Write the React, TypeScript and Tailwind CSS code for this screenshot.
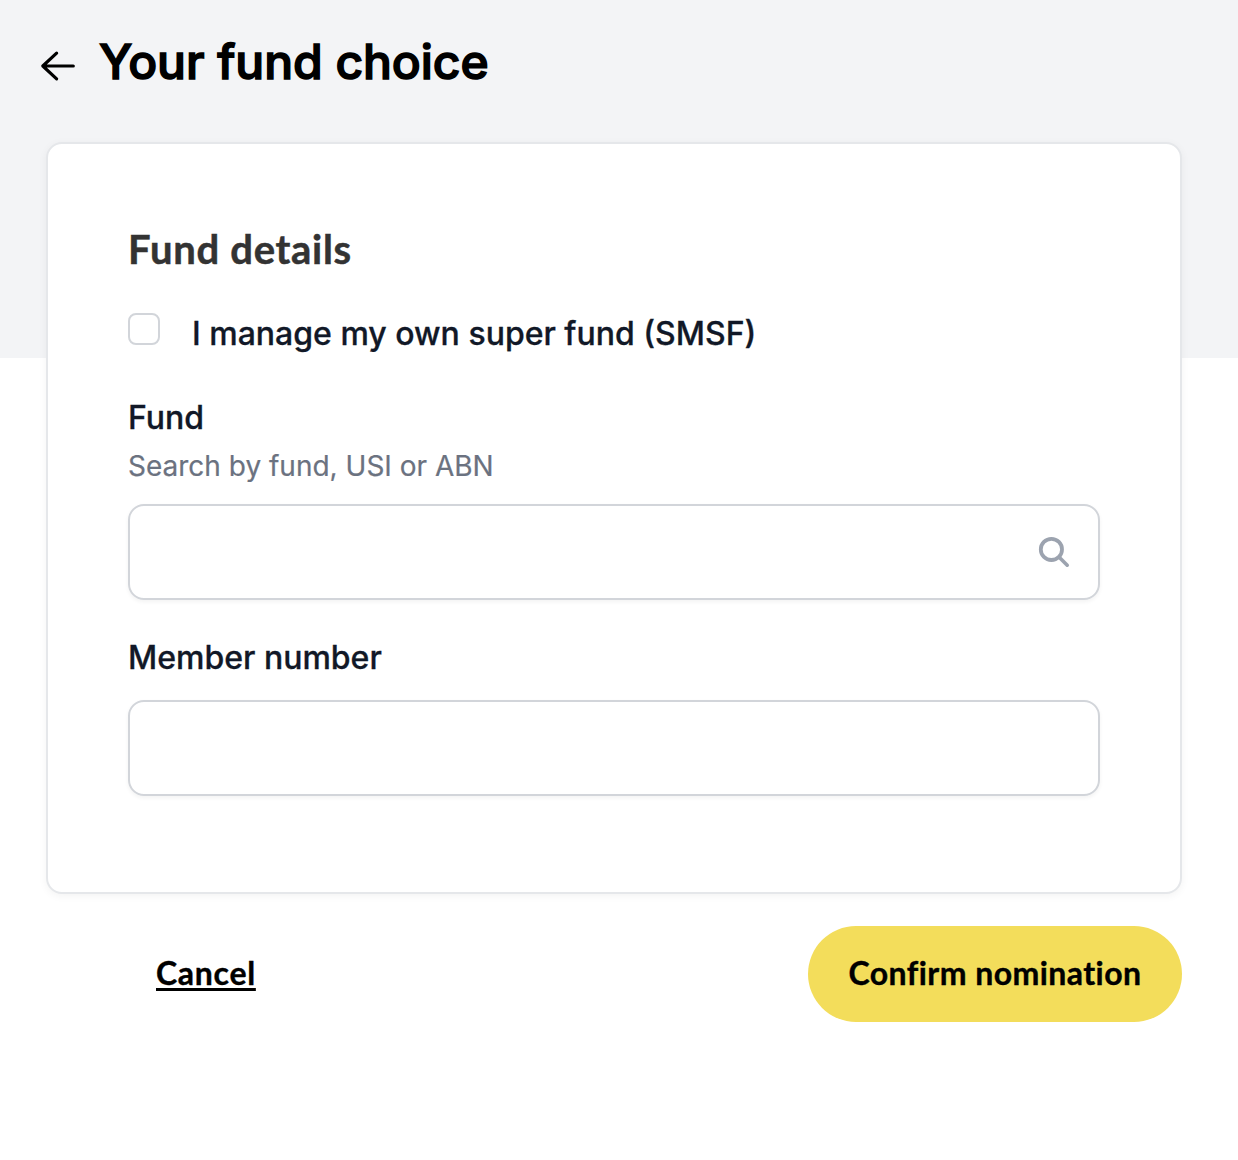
import React, { useState } from "react";

function ArrowLeft() {
  return (
    <svg
      width="36"
      height="32"
      viewBox="0 0 36 32"
      fill="none"
      stroke="currentColor"
      strokeWidth="3.2"
      strokeLinecap="round"
      strokeLinejoin="round"
    >
      <path d="M33.3 16H2.8M16.6 3.2 2.8 16l13.8 12.8" />
    </svg>
  );
}

function SearchIcon() {
  return (
    <svg
      width="32"
      height="32"
      viewBox="0 0 32 32"
      fill="none"
      stroke="currentColor"
      strokeLinecap="round"
    >
      <circle cx="13.4" cy="13.4" r="10.6" strokeWidth="3.8" />
      <path d="m21.5 21.5 7.7 7.7" strokeWidth="3.6" />
    </svg>
  );
}

export default function App() {
  const [smsf, setSmsf] = useState(false);

  return (
    <div className="h-[1160px] w-[1238px] bg-[linear-gradient(#f3f4f6_358px,#ffffff_358px)] pr-14 pl-[46px] font-['Inter',sans-serif] text-[#111827]">
      <header className="-ml-1.5 flex h-[142px] items-start text-black">
        <button className="mt-[50px]" aria-label="Back">
          <ArrowLeft />
        </button>
        <h1 className="mt-[31px] ml-[23px] text-5xl leading-[61px] font-medium tracking-[-0.05px] whitespace-nowrap [-webkit-text-stroke:1.5px_#000]">
          Your fund choice
        </h1>
      </header>

      <main className="h-[752px] rounded-2xl border-2 border-[#e5e7ea] bg-white px-20 pt-20 shadow-[0_2px_8px_rgba(0,0,0,0.05)]">
        <h2 className="-mt-px h-[57px] font-['Lato',sans-serif] text-[40px] leading-[52px] font-bold tracking-[0.7px] whitespace-nowrap text-[#333333] [-webkit-text-stroke:0.5px_#333333]">
          Fund details
        </h2>

        <label className="mt-[33px] flex h-[41px] items-start">
          <input
            type="checkbox"
            checked={smsf}
            onChange={() => setSmsf(!smsf)}
            className="size-8 appearance-none rounded-lg border-2 border-[#d2d5da] bg-white checked:bg-[#111827]"
          />
          <span className="mt-px ml-8 text-[32px] leading-10 font-medium whitespace-nowrap [-webkit-text-stroke:0.3px_#111827]">
            I manage my own super fund (SMSF)
          </span>
        </label>

        <div className="mt-11 flex flex-col">
          <label
            htmlFor="fund"
            className="text-[32px] leading-10 font-medium [-webkit-text-stroke:0.3px_#111827]"
          >
            Fund
          </label>
          <p className="mt-2 text-[28px] leading-10 text-[#6b7280] [-webkit-text-stroke:0.2px_#6b7280]">
            Search by fund, USI or ABN
          </p>
          <div className="mt-[18px] flex h-24 items-center rounded-2xl border-2 border-[#d2d5da] shadow-[0_2px_4px_rgba(0,0,0,0.05)]">
            <input
              id="fund"
              className="h-full flex-1 bg-transparent px-6 text-[32px] outline-none"
            />
            <span className="mr-7 text-[#9ca3af]">
              <SearchIcon />
            </span>
          </div>
        </div>

        <div className="mt-[38px] flex flex-col">
          <label
            htmlFor="member"
            className="text-[32px] leading-10 font-medium [-webkit-text-stroke:0.3px_#111827]"
          >
            Member number
          </label>
          <input
            id="member"
            className="mt-[22px] h-24 rounded-2xl border-2 border-[#d2d5da] px-6 text-[32px] shadow-[0_2px_4px_rgba(0,0,0,0.05)] outline-none"
          />
        </div>
      </main>

      <footer className="mt-8 flex h-24 items-center justify-between pl-[110px] font-['Lato',sans-serif] text-[32px] font-bold text-black">
        <button className="-mt-0.5 tracking-[0.7px] underline decoration-[3px] underline-offset-[3px] [-webkit-text-stroke:0.4px_#000]">
          Cancel
        </button>
        <button className="h-24 w-[374px] rounded-full bg-[#f3dd5b] pb-0.5 tracking-[0.45px] whitespace-nowrap [-webkit-text-stroke:0.4px_#000]">
          Confirm nomination
        </button>
      </footer>
    </div>
  );
}
